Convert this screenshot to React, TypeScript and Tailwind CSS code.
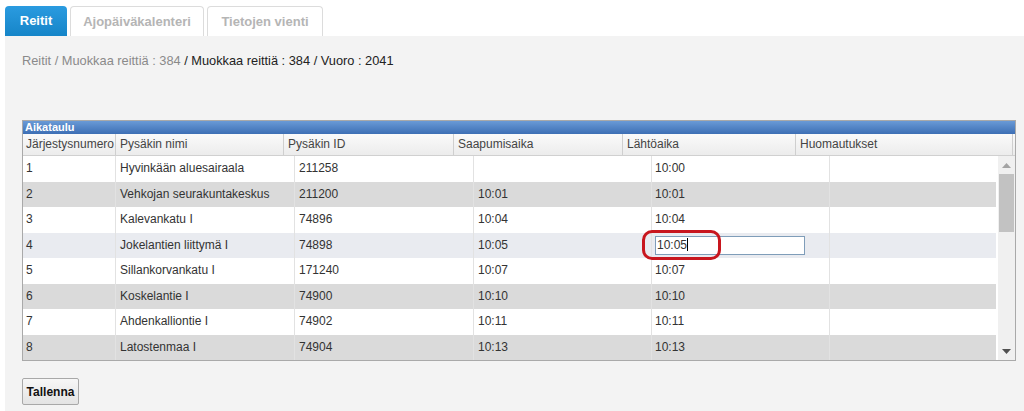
import React from "react";

const rows = [
  ["1", "Hyvinkään aluesairaala", "211258", "", "10:00"],
  ["2", "Vehkojan seurakuntakeskus", "211200", "10:01", "10:01"],
  ["3", "Kalevankatu I", "74896", "10:04", "10:04"],
  ["4", "Jokelantien liittymä I", "74898", "10:05", "10:05"],
  ["5", "Sillankorvankatu I", "171240", "10:07", "10:07"],
  ["6", "Koskelantie I", "74900", "10:10", "10:10"],
  ["7", "Ahdenkalliontie I", "74902", "10:11", "10:11"],
  ["8", "Latostenmaa I", "74904", "10:13", "10:13"],
];

const rowBg = [
  "bg-white",
  "bg-[#dadada]",
  "bg-white",
  "bg-[#e9ebf0]",
  "bg-white",
  "bg-[#dadada]",
  "bg-white",
  "bg-[#dadada]",
];

export default function App() {
  return (
    <div
      className="w-[1024px] h-[411px] bg-white flex flex-col overflow-hidden text-[#333]"
      style={{ fontFamily: '"Liberation Sans", Arial, sans-serif' }}
    >
      {/* Tabs */}
      <div className="flex items-end h-[36px] pl-[5px] pt-[6px] gap-[3px]">
        <div className="h-[30px] w-[62px] rounded-t-[4px] bg-gradient-to-b from-[#2a9be0] to-[#1585c8] text-white font-bold text-[13px] flex items-center justify-center">
          Reitit
        </div>
        <div className="h-[30px] w-[134px] rounded-t-[4px] bg-white border border-b-0 border-[#dcdcdc] text-[#b5b5b5] font-bold text-[13px] flex items-center justify-center">
          Ajopäiväkalenteri
        </div>
        <div className="h-[30px] w-[116px] rounded-t-[4px] bg-white border border-b-0 border-[#dcdcdc] text-[#b5b5b5] font-bold text-[13px] flex items-center justify-center">
          Tietojen vienti
        </div>
      </div>

      {/* Panel */}
      <div className="flex-1 ml-[5px] bg-[#f3f3f3] pl-[17px] pt-[17px] flex flex-col">
        <div className="text-[12.8px] leading-[15px] h-[15px]">
          <span className="text-[#8a8a8a]">Reitit / Muokkaa reittiä : 384</span>
          <span className="text-[#222]"> / Muokkaa reittiä : 384 / Vuoro : 2041</span>
        </div>

        {/* Table */}
        <div className="mt-[52px] w-[994px] border border-[#a9a9a9] bg-white flex flex-col">
          <div className="h-[13px] bg-gradient-to-b from-[#6a9ad6] to-[#3d6fb5] text-white font-bold text-[11px] leading-[13px] pl-[2px]">
            Aikataulu
          </div>
          {/* header */}
          <div className="flex h-[22px] bg-gradient-to-b from-[#fafafa] to-[#ececec] border-b border-[#d0d0d0] text-[12px] leading-[21px] text-[#444]">
            <div className="w-[93px] pl-[3px] border-r border-[#cfcfcf]">Järjestysnumero</div>
            <div className="w-[168px] pl-[4px] border-r border-[#cfcfcf]">Pysäkin nimi</div>
            <div className="w-[170px] pl-[4px] border-r border-[#cfcfcf]">Pysäkin ID</div>
            <div className="w-[169px] pl-[4px] border-r border-[#cfcfcf]">Saapumisaika</div>
            <div className="w-[173px] pl-[4px] border-r border-[#cfcfcf]">Lähtöaika</div>
            <div className="flex-1 pl-[4px] border-r border-[#cfcfcf] mr-[2px]">Huomautukset</div>
          </div>
          {/* body */}
          <div className="flex h-[204px]">
            <div className="w-[973px] flex flex-col">
              {rows.map((r, i) => (
                <div
                  key={i}
                  className={`flex h-[25.5px] text-[12px] leading-[25px] ${rowBg[i]}`}
                >
                  <div className="w-[93px] pl-[3px] border-r border-[#e2e2e2]">{r[0]}</div>
                  <div className="w-[179px] pl-[4px] border-r border-[#e2e2e2]">{r[1]}</div>
                  <div className="w-[179px] pl-[4px] border-r border-[#e2e2e2]">{r[2]}</div>
                  <div className="w-[178px] pl-[4px] border-r border-[#e2e2e2]">{r[3]}</div>
                  <div className="w-[178px] pl-[3px] border-r border-[#e2e2e2] relative">
                    {i === 3 ? (
                      <>
                        <div className="absolute left-[3px] top-[3px] w-[150px] h-[19px] border border-[#7f9db9] bg-white text-[12px] leading-[17px] pl-[1px]">
                          10:05<span className="inline-block w-[1px] h-[13px] bg-black align-middle -mt-[2px]"></span>
                        </div>
                        <div className="absolute left-[-10px] top-[-3px] w-[79px] h-[30px] border-[3px] border-[#c8161e] rounded-[10px]"></div>
                      </>
                    ) : (
                      r[4]
                    )}
                  </div>
                  <div className="flex-1"></div>
                </div>
              ))}
            </div>
            {/* scrollbar */}
            <div className="ml-[2px] w-[17px] bg-[#f0f0f0] flex flex-col items-center">
              <div className="h-[18px] flex items-center justify-center">
                <svg width="9" height="5" viewBox="0 0 9 5">
                  <path d="M0 5 L4.5 0 L9 5 Z" fill="#a3a3a3" />
                </svg>
              </div>
              <div className="w-[15px] h-[58px] bg-[#c2c2c2]"></div>
              <div className="flex-1"></div>
              <div className="h-[18px] flex items-center justify-center">
                <svg width="9" height="5" viewBox="0 0 9 5">
                  <path d="M0 0 L9 0 L4.5 5 Z" fill="#505050" />
                </svg>
              </div>
            </div>
          </div>
        </div>

        {/* Button */}
        <div className="mt-[17px]">
          <button className="h-[27px] w-[57px] border border-[#a8a8a8] bg-gradient-to-b from-[#f7f7f7] to-[#e3e3e3] text-[12px] font-bold text-[#111] rounded-[2px]">
            Tallenna
          </button>
        </div>
      </div>
    </div>
  );
}
